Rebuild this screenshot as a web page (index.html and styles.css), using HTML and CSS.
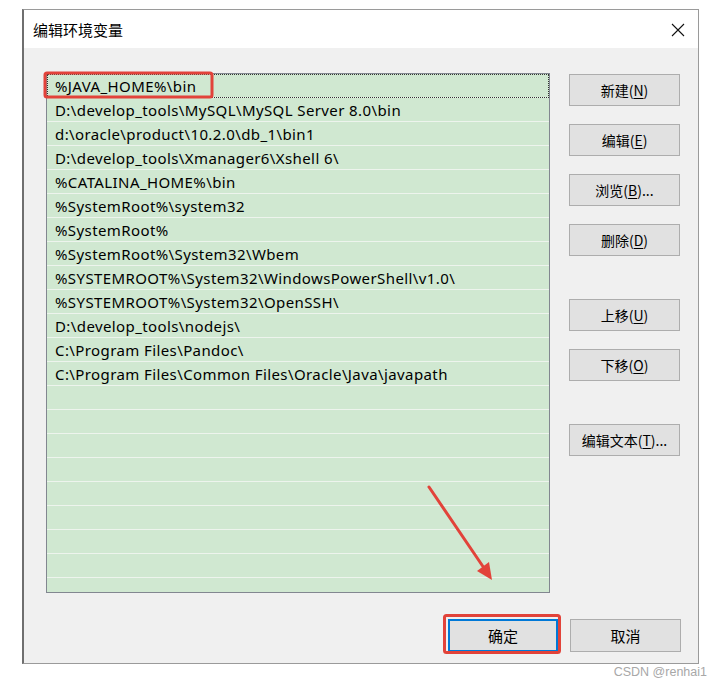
FILE: index.html
```html
<!DOCTYPE html>
<html lang="zh-CN">
<head>
<meta charset="utf-8">
<title>编辑环境变量</title>
<link rel="stylesheet" href="styles.css">
</head>
<body>
<div class="page">
  <div class="dialog">
    <div class="titlebar">
      <span class="title">编辑环境变量</span>
      <svg class="close" width="14" height="14" viewBox="0 0 14 14"><path d="M1 1 L13 13 M13 1 L1 13" stroke="#111" stroke-width="1.1" fill="none"/></svg>
    </div>
    <div class="body">
      <div class="main">
        <div class="list">
          <div class="row focus">%JAVA_HOME%\bin</div>
          <div class="row">D:\develop_tools\MySQL\MySQL Server 8.0\bin</div>
          <div class="row">d:\oracle\product\10.2.0\db_1\bin1</div>
          <div class="row">D:\develop_tools\Xmanager6\Xshell 6\</div>
          <div class="row">%CATALINA_HOME%\bin</div>
          <div class="row">%SystemRoot%\system32</div>
          <div class="row">%SystemRoot%</div>
          <div class="row">%SystemRoot%\System32\Wbem</div>
          <div class="row">%SYSTEMROOT%\System32\WindowsPowerShell\v1.0\</div>
          <div class="row">%SYSTEMROOT%\System32\OpenSSH\</div>
          <div class="row">D:\develop_tools\nodejs\</div>
          <div class="row">C:\Program Files\Pandoc\</div>
          <div class="row">C:\Program Files\Common Files\Oracle\Java\javapath</div>
          <div class="row"></div>
          <div class="row"></div>
          <div class="row"></div>
          <div class="row"></div>
          <div class="row"></div>
          <div class="row"></div>
          <div class="row"></div>
          <div class="row"></div>
          <div class="row"></div>
        </div>
        <div class="side">
          <button class="btn">新建(<u>N</u>)</button>
          <button class="btn">编辑(<u>E</u>)</button>
          <button class="btn">浏览(<u>B</u>)...</button>
          <button class="btn">删除(<u>D</u>)</button>
          <button class="btn gap">上移(<u>U</u>)</button>
          <button class="btn">下移(<u>O</u>)</button>
          <button class="btn gap">编辑文本(<u>T</u>)...</button>
        </div>
      </div>
      <div class="footer">
        <button class="btn primary">确定</button>
        <button class="btn">取消</button>
      </div>
    </div>
  </div>
  <div class="watermark">CSDN @renhai1</div>
  <svg class="annot" width="723" height="685" viewBox="0 0 723 685">
    <rect x="45" y="73" width="167" height="24" rx="2" fill="none" stroke="#e2433a" stroke-width="3"/>
    <rect x="444.5" y="615.5" width="115" height="37" rx="2" fill="none" stroke="#e2433a" stroke-width="3"/>
    <line x1="429" y1="487" x2="484" y2="568" stroke="#e2433a" stroke-width="3" stroke-linecap="round"/>
    <polygon points="492,580 477,571 489,562" fill="#e2433a"/>
  </svg>
</div>
</body>
</html>
```

FILE: styles.css
```css
* { box-sizing: border-box; }
html, body { margin: 0; padding: 0; background: #fff; }
body { font-family: "Noto Sans", "Noto Sans CJK SC", sans-serif; color: #000; }

.page {
  position: relative;
  width: 723px;
  height: 685px;
  padding: 9px 0 0 22px;
}

.dialog {
  width: 677px;
  height: 655px;
  border: 1px solid #9a9a9a;
  border-left: 2px solid #6f6f6f;
  background: #f0f0f0;
  display: flex;
  flex-direction: column;
}

.titlebar {
  height: 38px;
  background: #fff;
  display: flex;
  align-items: center;
  justify-content: space-between;
  padding: 0 13px 0 9px;
}
.title {
  font-family: "Noto Sans CJK SC", sans-serif;
  font-size: 15px;
  line-height: 20px;
  margin-top: 2px;
}
.close { margin-top: 2px; }

.body {
  flex: 1;
  display: flex;
  flex-direction: column;
  padding: 25px 17px 0 22px;
}

.main {
  display: flex;
  gap: 19px;
}

.list {
  width: 504px;
  height: 520px;
  border: 1px solid #828790;
  background: #d0e8d1;
  overflow: hidden;
}
.row {
  height: 24px;
  border-bottom: 1px solid #edf4ed;
  padding: 1px 0 0 8px;
  font-size: 15px;
  line-height: 22px;
  white-space: nowrap;
  font-family: "Noto Sans", "Noto Sans CJK SC", sans-serif;
  letter-spacing: 0.4px;
}
.row.focus {
  outline: 1px dotted #333;
  outline-offset: -1px;
}

.side {
  display: flex;
  flex-direction: column;
  gap: 18px;
  padding-top: 1px;
}

.btn {
  width: 111px;
  height: 32px;
  background: #e1e1e1;
  border: 1px solid #adadad;
  font-family: "Noto Sans CJK SC", sans-serif;
  font-size: 14px;
  color: #000;
  padding: 0;
  line-height: 20px;
}
.btn u { text-underline-offset: 2px; }
.side .gap { margin-top: 25px; }

.footer {
  display: flex;
  justify-content: flex-end;
  gap: 12px;
  margin-top: 26px;
}
.footer .btn { height: 33px; font-size: 15px; }
.btn.primary {
  width: 110px;
  border: 2px solid #0078d7;
}

.watermark {
  text-align: right;
  padding-right: 16px;
  font-family: "Liberation Sans", sans-serif;
  font-size: 12.5px;
  color: #a8a8a8;
  line-height: 16px;
}

.annot {
  position: absolute;
  left: 0;
  top: 0;
  pointer-events: none;
}
```
